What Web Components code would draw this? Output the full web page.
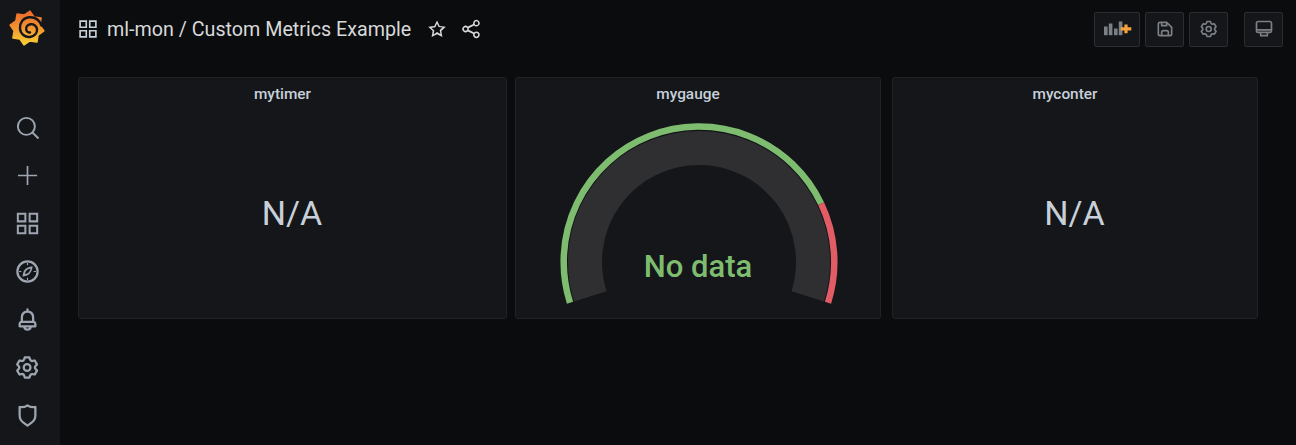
<!DOCTYPE html>
<html>
<head>
<meta charset="utf-8">
<title>ml-mon / Custom Metrics Example</title>
<style>
  html, body { margin: 0; height: 100%; background: #0b0c0e; overflow: hidden; }
  body { display: flex; font-family: Roboto, "Liberation Sans", sans-serif; }
</style>
</head>
<body>
<side-menu></side-menu>
<dash-main>
  <top-nav slot="nav"></top-nav>
  <metric-panel title="mytimer" style="width:429px"><single-stat>N/A</single-stat></metric-panel>
  <metric-panel title="mygauge" style="width:366px"><gauge-view></gauge-view></metric-panel>
  <metric-panel title="myconter" style="width:366px;margin-left:3px"><single-stat>N/A</single-stat></metric-panel>
</dash-main>

<script>
const ICONS = {
  search: '<path d="M11 2.6a8.4 8.4 0 1 0 0 16.8 8.4 8.4 0 0 0 0-16.8Zm0 1.700a6.700 6.700 0 1 1 0 13.400 6.700 6.700 0 0 1 0-13.400Z"/><path d="m17 15.800 5.400 5.400-1.200 1.200-5.400-5.400Z"/>',
  plus: '<path d="M11.25 3.5h1.5v7.75h7.75v1.5h-7.75v7.75h-1.5v-7.75H3.5v-1.5h7.75Z"/>',
  apps: '<path fill-rule="evenodd" d="M2.5 2.5h8.5V11H2.5Zm1.8 1.8v4.900h4.900V4.300ZM13 2.500h8.500V11H13Zm1.800 1.800v4.900h4.900V4.300ZM2.500 13H11v8.500H2.500Zm1.800 1.800v4.900h4.900v-4.900ZM13 13h8.500v8.500H13Zm1.800 1.800v4.900h4.900v-4.900Z"/>',
  compass: '<path d="M12,2A10,10,0,1,0,22,12,10,10,0,0,0,12,2Zm0,18a8,8,0,1,1,8-8A8,8,0,0,1,12,20Z"/><path d="M11.500 4.500h1v2h-1ZM11.500 17.500h1v2h-1ZM4.500 11.500h2v1h-2ZM17.500 11.500h2v1h-2Z"/><path d="M16.600 7.400c-3.400.4-6.600 1.800-7.700 4-.7 1.400-.9 3.300-1.500 5.200 1.900-.6 3.800-.8 5.200-1.500 2.200-1.100 3.600-4.300 4-7.700Zm-1.900 1.900c-.4 1.900-1.300 3.600-2.600 4.300-.7.400-1.500.5-2.400.7.200-.9.300-1.700.7-2.400.7-1.300 2.400-2.200 4.300-2.600Z"/>',
  bell: '<path d="M18,13.18V10a6,6,0,0,0-5-5.91V3a1,1,0,0,0-2,0V4.09A6,6,0,0,0,6,10v3.18A3,3,0,0,0,4,16v2a1,1,0,0,0,1,1H8.14a4,4,0,0,0,7.72,0H19a1,1,0,0,0,1-1V16A3,3,0,0,0,18,13.18ZM8,10a4,4,0,0,1,8,0v3H8ZM12,20a2,2,0,0,1-1.72-1h3.44A2,2,0,0,1,12,20Zm6-3H6V16a1,1,0,0,1,1-1H17a1,1,0,0,1,1,1Z"/>',
  cog: '<path d="M19.9,12.66a1,1,0,0,1,0-1.32L21.18,9.9a1,1,0,0,0,.12-1.17l-2-3.46a1,1,0,0,0-1.07-.48l-1.88.38a1,1,0,0,1-1.15-.66l-.61-1.83A1,1,0,0,0,13.64,2h-4a1,1,0,0,0-1,.68L8.08,4.51a1,1,0,0,1-1.15.66L5,4.79A1,1,0,0,0,4,5.27L2,8.73A1,1,0,0,0,2.1,9.9l1.27,1.44a1,1,0,0,1,0,1.32L2.1,14.1A1,1,0,0,0,2,15.27l2,3.46a1,1,0,0,0,1.07.48l1.88-.38a1,1,0,0,1,1.15.66l.61,1.83a1,1,0,0,0,1,.68h4a1,1,0,0,0,.95-.68l.61-1.83a1,1,0,0,1,1.15-.66l1.88.38a1,1,0,0,0,1.07-.48l2-3.46a1,1,0,0,0-.12-1.17ZM18.41,14l.8.9-1.28,2.22-1.18-.24a3,3,0,0,0-3.45,2L12.92,20H10.36L10,18.86a3,3,0,0,0-3.45-2l-1.18.24L4.07,14.89l.8-.9a3,3,0,0,0,0-4l-.8-.9L5.35,6.89l1.18.24a3,3,0,0,0,3.45-2L10.36,4h2.56l.38,1.14a3,3,0,0,0,3.45,2l1.18-.24,1.28,2.22-.8.9A3,3,0,0,0,18.41,14ZM11.64,8a4,4,0,1,0,4,4A4,4,0,0,0,11.64,8Zm0,6a2,2,0,1,1,2-2A2,2,0,0,1,11.64,14Z"/>',
  shield: '<path d="M19.63,3.65a1,1,0,0,0-.84-.2,8,8,0,0,1-6.22-1.27,1,1,0,0,0-1.14,0A8,8,0,0,1,5.21,3.45a1,1,0,0,0-.84.2,1,1,0,0,0-.37.78v7.45a9,9,0,0,0,3.77,7.33l3.65,2.6a1,1,0,0,0,1.16,0l3.65-2.6A9,9,0,0,0,20,11.88V4.43A1,1,0,0,0,19.63,3.65ZM18,11.88a7,7,0,0,1-2.93,5.7L12,19.77l-3.07-2.19A7,7,0,0,1,6,11.88v-6.3a10,10,0,0,0,6-1.39,10,10,0,0,0,6,1.39Z"/>',
  star: '<path d="M12 2.600 14.900 8.700l6.700.9-4.900 4.600 1.200 6.600L12 17.600 6.100 20.800l1.200-6.600L2.400 9.600l6.700-.9Zm0 3.700-1.800 3.900-4.200.6 3.100 2.900-.8 4.200L12 15.400l3.700 2-.8-4.200 3.100-2.900-4.200-.6Z"/>',
  share: '<path d="M18 14a3.900 3.900 0 0 0-2.800 1.200l-6.400-3.200v-1.900l6.400-3.200A4 4 0 1 0 14 4a4 4 0 0 0 .1.900L7.800 8.100a4 4 0 1 0 0 5.800l6.300 3.200A4 4 0 1 0 18 14Zm0-12.200a2.200 2.200 0 1 1 0 4.400 2.200 2.200 0 0 1 0-4.400ZM5 13.200a2.200 2.200 0 1 1 0-4.400 2.200 2.200 0 0 1 0 4.400Zm13 7a2.200 2.200 0 1 1 0-4.400 2.200 2.200 0 0 1 0 4.400Z" transform="translate(.5 1)"/>',
  save: '<path d="M20.71,9.29l-6-6a1,1,0,0,0-.32-.21A1.09,1.09,0,0,0,14,3H6A3,3,0,0,0,3,6V18a3,3,0,0,0,3,3H18a3,3,0,0,0,3-3V10A1,1,0,0,0,20.71,9.29ZM9,5h4V7H9Zm6,14H9V16a1,1,0,0,1,1-1h4a1,1,0,0,1,1,1Zm4-1a1,1,0,0,1-1,1H17V16a3,3,0,0,0-3-3H10a3,3,0,0,0-3,3v3H6a1,1,0,0,1-1-1V6A1,1,0,0,1,6,5H7V8A1,1,0,0,0,8,9h6a1,1,0,0,0,1-1V6.41l4,4Z"/>',
  monitor: '<path d="M5 2h14a3 3 0 0 1 3 3v9a3 3 0 0 1-3 3h-2v3a1 1 0 0 1-1 1H8a1 1 0 0 1-1-1v-3H5a3 3 0 0 1-3-3V5a3 3 0 0 1 3-3Zm0 2a1 1 0 0 0-1 1v7h16V5a1 1 0 0 0-1-1Zm-1 10a1 1 0 0 0 1 1h14a1 1 0 0 0 1-1Zm5 3v2h6v-2Z"/>',
  addpanel: '<rect x="0" y="7.500" width="3.600" height="8.700"/><rect x="4.800" y="4.500" width="3.600" height="11.700"/><rect x="10" y="9.500" width="3.600" height="6.700"/><rect x="14.800" y="2.500" width="3.600" height="13.700"/><path fill="#f5a43b" d="M20.400 5.400h3.200v2.800h3.700v3.200h-3.700v2.800h-3.200v-2.800h-3.700V8.200h3.700Z"/>'
}

const icon = (name, size, box = '0 0 24 24') =>
  `<svg width="${size}" height="${size}" viewBox="${box}" fill="currentColor" aria-hidden="true">${ICONS[name]}</svg>`

class GrafanaLogo extends HTMLElement {
  constructor() {
    super()
    this.attachShadow({ mode: 'open' })
    // eight teeth around the spiral
    const pts = []
    for (let i = 0; i < 16; i++) {
      const a = (i * 22.5 - 80) * Math.PI / 180
      const r = i % 2 ? 13.2 : 17.2
      pts.push((25 + r * Math.cos(a)).toFixed(1) + ',' + (28 + r * Math.sin(a)).toFixed(1))
    }
    this.shadowRoot.innerHTML = `
      <style>
        :host { display: block; width: 50px; height: 58px; }
        svg { display: block; }
      </style>
      <svg width="50" height="58" viewBox="0 0 50 58" aria-label="Grafana">
        <defs>
          <linearGradient id="g" x1="0" y1="0" x2="0" y2="1">
            <stop offset="0" stop-color="#ee6a2c"/>
            <stop offset=".45" stop-color="#f28f2e"/>
            <stop offset="1" stop-color="#f9d135"/>
          </linearGradient>
        </defs>
        <polygon points="${pts.join(' ')}" fill="url(#g)" stroke="url(#g)" stroke-width="1.500" stroke-linejoin="round"/>
        <path d="M39.500 25.500C37 19 32 16.800 27 17.300 21 18 17.600 23 18 28.500 18.500 34 23 37.500 28 37 32.500 36.400 35.500 33 35 29 34.500 25.800 31.500 23.800 28.500 24.200 25.500 24.700 23.800 27 24.200 29.500 24.500 31.500 26.300 32.800 28 32.500" fill="none" stroke="#16171b" stroke-width="2.400" stroke-linecap="round"/>
      </svg>`
  }
}
customElements.define('grafana-logo', GrafanaLogo)

class SideMenu extends HTMLElement {
  constructor() {
    super()
    this.attachShadow({ mode: 'open' })
    const items = ['search', 'plus', 'apps', 'compass', 'bell', 'cog', 'shield']
    this.shadowRoot.innerHTML = `
      <style>
        :host { display: flex; flex-direction: column; flex: none; width: 60px; background: #141619; color: #9da5b0; }
        .logo { height: 103.5px; padding-left: 2px; box-sizing: border-box; }
        .item { display: flex; align-items: center; justify-content: center; height: 48px; width: 55px; }
        svg { display: block; }
      </style>
      <div class="logo"><grafana-logo></grafana-logo></div>
      ${items.map(n => `<div class="item">${icon(n, 27)}</div>`).join('')}`
  }
}
customElements.define('side-menu', SideMenu)

class NavButton extends HTMLElement {
  constructor() {
    super()
    this.attachShadow({ mode: 'open' })
    this.shadowRoot.innerHTML = `
      <style>
        :host { display: flex; align-items: center; justify-content: center; box-sizing: border-box; height: 35px; width: 39px;
                background: #141619; border: 1px solid #2b2d31; border-radius: 2px; color: #7b8087; }
        svg { display: block; }
      </style>
      <slot></slot>`
  }
}
customElements.define('nav-button', NavButton)

class TopNav extends HTMLElement {
  constructor() {
    super()
    this.attachShadow({ mode: 'open' })
    this.shadowRoot.innerHTML = `
      <style>
        :host { display: flex; align-items: center; height: 58px; padding: 0 13px 0 17px; color: #d8d9da; }
        svg { display: block; }
        .crumb { color: #c7d0d9; margin-right: 8px; }
        h1 { margin: 0; padding-top: 1px; font: 400 19.7px/24px Roboto, "Liberation Sans", sans-serif; color: #d8d9da; }
        .tools { display: flex; align-items: center; gap: 13px; margin-left: 15px; color: #d8d9da; }
        .right { margin-left: auto; display: flex; gap: 5px; }
      </style>
      <span class="crumb">${icon('apps', 22)}</span>
      <h1>ml-mon / Custom Metrics Example</h1>
      <div class="tools">
        <span>${icon('star', 22)}</span>
        <span>${icon('share', 20)}</span>
      </div>
      <div class="right">
        <nav-button style="width:46px;padding-left:2px"><svg width="28" height="20" viewBox="0 0 28 20" fill="currentColor" style="display:block">${ICONS.addpanel}</svg></nav-button>
        <nav-button>${icon('save', 20)}</nav-button>
        <nav-button>${icon('cog', 20)}</nav-button>
        <nav-button style="margin-left:11px">${icon('monitor', 20)}</nav-button>
      </div>`
  }
}
customElements.define('top-nav', TopNav)

class DashMain extends HTMLElement {
  constructor() {
    super()
    this.attachShadow({ mode: 'open' })
    this.shadowRoot.innerHTML = `
      <style>
        :host { display: block; flex: 1; min-width: 0; }
        .grid { display: flex; gap: 8px; padding: 19px 0 0 18px; }
      </style>
      <slot name="nav"></slot>
      <div class="grid"><slot></slot></div>`
  }
}
customElements.define('dash-main', DashMain)

class MetricPanel extends HTMLElement {
  constructor() {
    super()
    this.attachShadow({ mode: 'open' })
    this.shadowRoot.innerHTML = `
      <style>
        :host { display: flex; flex-direction: column; flex: none; box-sizing: border-box; height: 242px;
                background: #141619; border: 1px solid #202226; border-radius: 3px; }
        header { flex: none; height: 32px; padding-right: 20px; text-align: center;
                 font: 500 15.4px/32px Roboto, "Liberation Sans", sans-serif; color: #c7d0d9; }
        .body { flex: 1; display: flex; align-items: center; justify-content: center; min-height: 0; }
      </style>
      <header>${this.getAttribute('title')}</header>
      <div class="body"><slot></slot></div>`
    this.removeAttribute('title')
  }
}
customElements.define('metric-panel', MetricPanel)

class SingleStat extends HTMLElement {
  constructor() {
    super()
    this.attachShadow({ mode: 'open' })
    this.shadowRoot.innerHTML = `
      <style>
        :host { display: block; margin: 0 1px 2px 0; font: 400 34px/40px Roboto, "Liberation Sans", sans-serif; color: #c7d0d9; }
      </style>
      <slot></slot>`
  }
}
customElements.define('single-stat', SingleStat)

class GaugeView extends HTMLElement {
  constructor() {
    super()
    this.attachShadow({ mode: 'open' })
    this.shadowRoot.innerHTML = `
      <style>
        :host { display: block; width: 364px; height: 208px; }
        svg { display: block; }
        text { font: 500 31px Roboto, "Liberation Sans", sans-serif; fill: #7ebd6f; }
      </style>
      <svg width="364" height="208" viewBox="516 110 364 208" fill="none">
        <path d="M590.300 296.300A114 114 0 1 1 807.700 296.300" stroke="#2f2f32" stroke-width="34"/>
        <path d="M570 302.700A135.300 135.300 0 0 1 821.100 203.600" stroke="#7ebd6f" stroke-width="6.500"/>
        <path d="M821.100 203.600A135.300 135.300 0 0 1 828 302.700" stroke="#e25c66" stroke-width="6.500"/>
        <text x="698" y="277" text-anchor="middle">No data</text>
      </svg>`
  }
}
customElements.define('gauge-view', GaugeView)
</script>
</body>
</html>
